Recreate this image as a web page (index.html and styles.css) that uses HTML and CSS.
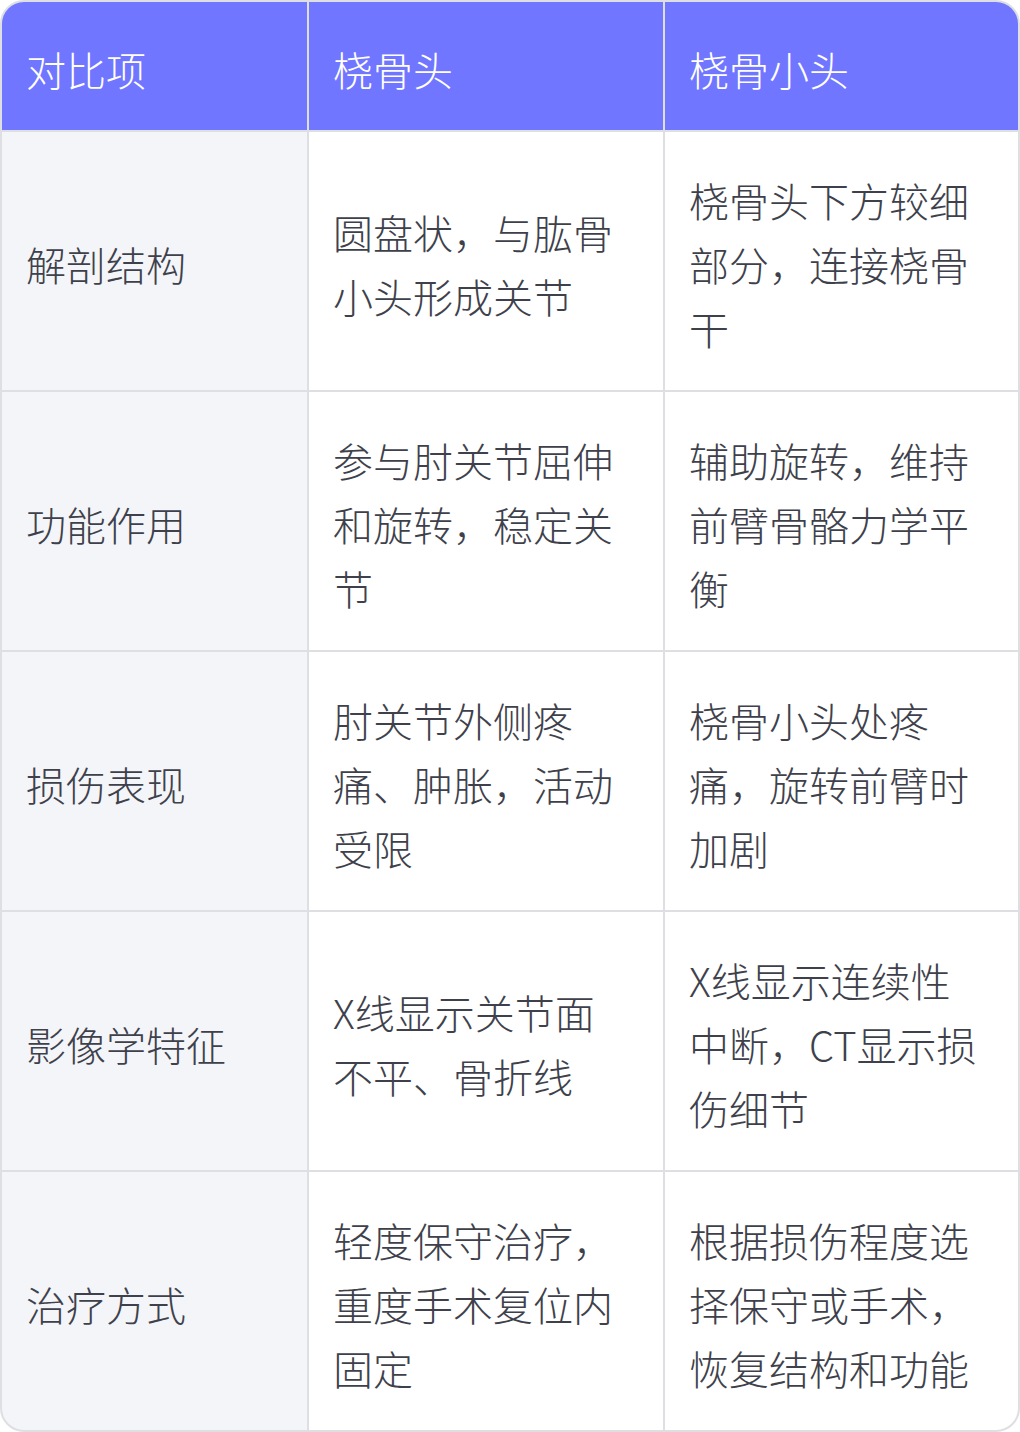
FILE: index.html
```html
<!DOCTYPE html>
<html lang="zh-CN">
<head>
<meta charset="utf-8">
<title>桡骨头与桡骨小头对比</title>
<link rel="stylesheet" href="styles.css">
</head>
<body>
<div class="table">
  <div class="cell head">对比项</div>
  <div class="cell head">桡骨头</div>
  <div class="cell head">桡骨小头</div>

  <div class="cell label">解剖结构</div>
  <div class="cell">圆盘状，与肱骨小头形成关节</div>
  <div class="cell">桡骨头下方较细部分，连接桡骨干</div>

  <div class="cell label">功能作用</div>
  <div class="cell">参与肘关节屈伸和旋转，稳定关节</div>
  <div class="cell">辅助旋转，维持前臂骨骼力学平衡</div>

  <div class="cell label">损伤表现</div>
  <div class="cell">肘关节外侧疼痛、肿胀，活动受限</div>
  <div class="cell">桡骨小头处疼痛，旋转前臂时加剧</div>

  <div class="cell label">影像学特征</div>
  <div class="cell">X线显示关节面不平、骨折线</div>
  <div class="cell">X线显示连续性中断，CT显示损伤细节</div>

  <div class="cell label">治疗方式</div>
  <div class="cell">轻度保守治疗，重度手术复位内固定</div>
  <div class="cell">根据损伤程度选择保守或手术，恢复结构和功能</div>
</div>
</body>
</html>
```

FILE: styles.css
```css
html, body {
  margin: 0;
  padding: 0;
  background: #ffffff;
}

.table {
  box-sizing: border-box;
  width: 1020px;
  display: grid;
  grid-template-columns: 305px 354px 1fr;
  gap: 2px;
  background: #dedfe3;
  border: 2px solid #dedfe3;
  border-radius: 24px;
  overflow: hidden;
  font-family: "Noto Sans CJK SC", "Noto Sans", sans-serif;
  font-weight: 300;
  font-size: 40px;
  line-height: 64px;
  color: #3e414b;
}

.cell {
  display: flex;
  align-items: center;
  background: #ffffff;
  padding: 36px 32px 30px 24px;
  min-height: 192px;
}

.cell.head {
  background: #7076ff;
  color: #ffffff;
  padding: 35px 24px 29px;
  min-height: 64px;
}

.cell.label {
  background: #f4f5f9;
}
```
